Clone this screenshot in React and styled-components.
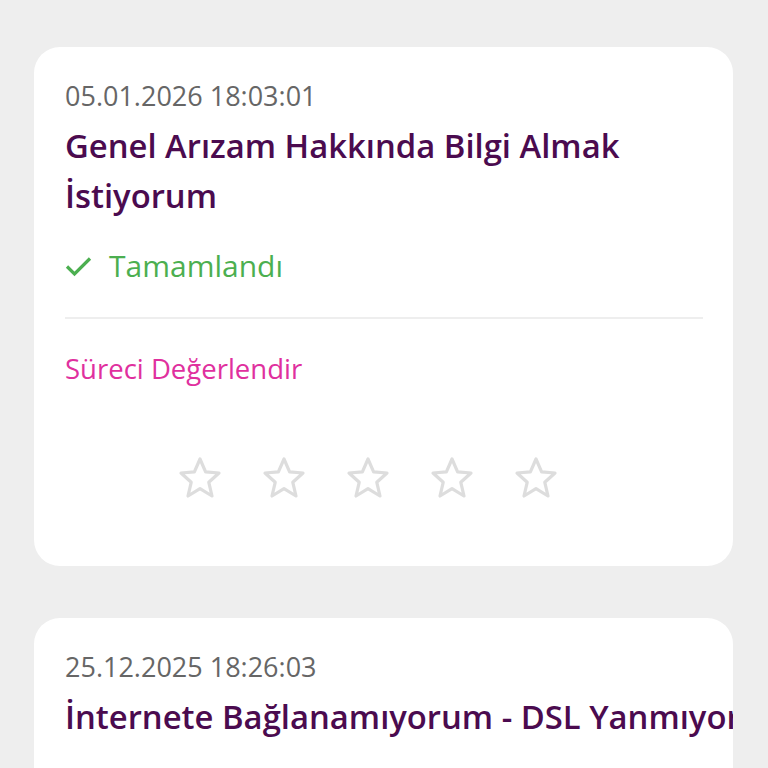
import React from 'react'
import styled, { createGlobalStyle } from 'styled-components'

const GlobalStyle = createGlobalStyle`
  html, body {
    margin: 0;
    padding: 0;
    background: #eeeeee;
    font-family: 'Open Sans', 'Noto Sans', sans-serif;
  }
`

const Page = styled.div`
  display: flex;
  flex-direction: column;
  gap: 52px;
  padding: 47px 35px 0 34px;
  height: 768px;
  box-sizing: border-box;
  overflow: hidden;
`

const Card = styled.div`
  background: #ffffff;
  border-radius: 26px;
  padding: 32px 30px 66px 31px;
  overflow: hidden;
  flex-shrink: 0;
`

const DateText = styled.div`
  font-size: 27px;
  line-height: 34px;
  color: #666666;
  white-space: nowrap;
`

const Title = styled.div`
  margin-top: 8px;
  font-size: 32.8px;
  line-height: 50px;
  font-weight: 600;
  color: #4b0b4f;
  white-space: ${p => (p.$nowrap ? 'nowrap' : 'normal')};
`

const Status = styled.div`
  margin-top: 28px;
  display: flex;
  align-items: center;
  gap: 17px;
  font-size: 30px;
  line-height: 34px;
  color: #4caf50;
`

const Divider = styled.div`
  margin-top: 34px;
  height: 2px;
  background: #eeeeee;
`

const RateLink = styled.div`
  margin-top: 34px;
  font-size: 27.5px;
  line-height: 32px;
  color: #e0309e;
`

const Stars = styled.div`
  margin-top: 71px;
  display: flex;
  justify-content: center;
  gap: 40px;
  padding-right: 32px;
`

const StarIcon = () => (
  <svg width="44" height="44" viewBox="0 0 44 44">
    <polygon
      points="22,3 27.6,15.8 41,17 30.8,26.3 34,40 22,32.7 10,40 13.2,26.3 3,17 16.4,15.8"
      fill="none"
      stroke="#dddddd"
      strokeWidth="3.2"
      strokeLinejoin="round"
    />
  </svg>
)

const CheckIcon = () => (
  <svg width="27" height="22" viewBox="0 0 27 22">
    <path d="M2 11.5 L9.5 19 L25 3.5" fill="none" stroke="#4caf50" strokeWidth="3.2" />
  </svg>
)

const requests = [
  {
    date: '05.01.2026 18:03:01',
    title: 'Genel Arızam Hakkında Bilgi Almak İstiyorum',
    status: 'Tamamlandı',
    rate: true
  },
  {
    date: '25.12.2025 18:26:03',
    title: 'İnternete Bağlanamıyorum - DSL Yanmıyor',
    nowrap: true
  }
]

const App = () => {
  return (
    <Page>
      <GlobalStyle />
      {requests.map((r, i) => (
        <Card key={i}>
          <DateText>{r.date}</DateText>
          <Title $nowrap={r.nowrap}>{r.title}</Title>
          {r.status && (
            <Status>
              <CheckIcon />
              {r.status}
            </Status>
          )}
          {r.rate && (
            <>
              <Divider />
              <RateLink>Süreci Değerlendir</RateLink>
              <Stars>
                {[0, 1, 2, 3, 4].map(n => <StarIcon key={n} />)}
              </Stars>
            </>
          )}
        </Card>
      ))}
    </Page>
  )
}

export default App
